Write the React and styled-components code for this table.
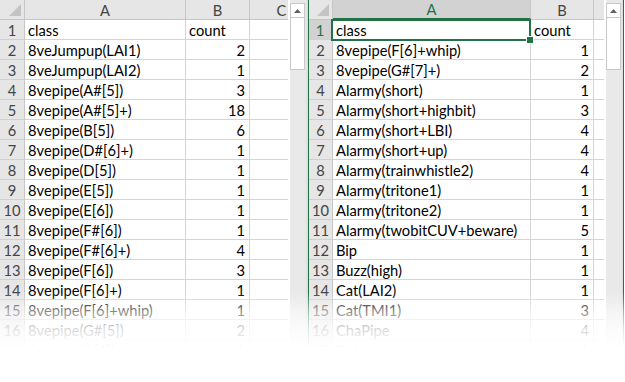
import styled, { createGlobalStyle } from "styled-components";

const GlobalStyle = createGlobalStyle`
  html, body {
    margin: 0;
    padding: 0;
    background: #ffffff;
  }
  body {
    font-family: Lato, "Liberation Sans", sans-serif;
  }
`;

const leftRows = [
  ["class", "count"],
  ["8veJumpup(LAI1)", 2],
  ["8veJumpup(LAI2)", 1],
  ["8vepipe(A#[5])", 3],
  ["8vepipe(A#[5]+)", 18],
  ["8vepipe(B[5])", 6],
  ["8vepipe(D#[6]+)", 1],
  ["8vepipe(D[5])", 1],
  ["8vepipe(E[5])", 1],
  ["8vepipe(E[6])", 1],
  ["8vepipe(F#[6])", 1],
  ["8vepipe(F#[6]+)", 4],
  ["8vepipe(F[6])", 3],
  ["8vepipe(F[6]+)", 1],
  ["8vepipe(F[6]+whip)", 1],
  ["8vepipe(G#[5])", 2],
  ["8vepipe(G[6])", 1],
];

const rightRows = [
  ["class", "count"],
  ["8vepipe(F[6]+whip)", 1],
  ["8vepipe(G#[7]+)", 2],
  ["Alarmy(short)", 1],
  ["Alarmy(short+highbit)", 3],
  ["Alarmy(short+LBI)", 4],
  ["Alarmy(short+up)", 4],
  ["Alarmy(trainwhistle2)", 4],
  ["Alarmy(tritone1)", 1],
  ["Alarmy(tritone2)", 1],
  ["Alarmy(twobitCUV+beware)", 5],
  ["Bip", 1],
  ["Buzz(high)", 1],
  ["Cat(LAI2)", 1],
  ["Cat(TMI1)", 3],
  ["ChaPipe", 4],
  ["Chime", 1],
];

const Stage = styled.div`
  position: relative;
  width: 625px;
  height: 382px;
  overflow: hidden;
  display: flex;
  background: #ffffff;
`;

const Window = styled.div`
  display: flex;
  height: 382px;
  box-sizing: border-box;
  border-left: ${(p) => (p.$active ? "1px solid #217346" : "none")};
  border-right: ${(p) => (p.$active ? "1px solid #217346" : "none")};
`;

const GridArea = styled.div`
  width: ${(p) => p.$width}px;
  overflow: hidden;
  background: #ffffff;
`;

const Sheet = styled.div`
  display: grid;
  grid-template-columns: ${(p) => p.$cols};
  grid-auto-rows: 20px;
  font-size: 14.7px;
  color: #000000;
`;

const Corner = styled.div`
  position: relative;
  background: #e6e6e6;
  border-right: 1px solid #c6c6c6;
  border-bottom: 1px solid #c6c6c6;
  box-sizing: border-box;

  &::after {
    content: "";
    position: absolute;
    right: 3px;
    bottom: 3px;
    width: 0;
    height: 0;
    border-left: 12px solid transparent;
    border-bottom: 12px solid #c3c3c3;
  }
`;

const ColHead = styled.div`
  background: ${(p) => (p.$sel ? "#d2d2d2" : "#e6e6e6")};
  color: ${(p) => (p.$sel ? "#217346" : "#444444")};
  border-right: 1px solid #c6c6c6;
  border-bottom: ${(p) => (p.$sel ? "2px solid #217346" : "1px solid #c6c6c6")};
  box-sizing: border-box;
  display: flex;
  align-items: center;
  justify-content: center;
  white-space: nowrap;
`;

const RowHead = styled.div`
  background: ${(p) => (p.$sel ? "#d2d2d2" : "#e6e6e6")};
  color: ${(p) => (p.$sel ? "#217346" : "#444444")};
  border-right: ${(p) => (p.$sel ? "2px solid #217346" : "1px solid #c6c6c6")};
  border-bottom: 1px solid #d0d0d0;
  box-sizing: border-box;
  display: flex;
  align-items: center;
  justify-content: center;
`;

const Cell = styled.div`
  position: relative;
  border-right: 1px solid #d4d4d4;
  border-bottom: 1px solid #d4d4d4;
  box-sizing: border-box;
  display: flex;
  align-items: center;
  justify-content: ${(p) => (p.$num ? "flex-end" : "flex-start")};
  padding: 0 4px 0 3px;
  white-space: nowrap;
  overflow: visible;

  ${(p) =>
    p.$active &&
    `
    z-index: 2;
    &::after {
      content: "";
      position: absolute;
      left: -2px;
      top: -1px;
      right: -1px;
      bottom: -2px;
      border: 2px solid #217346;
    }
    &::before {
      content: "";
      position: absolute;
      right: -4px;
      bottom: -5px;
      width: 6px;
      height: 6px;
      background: #217346;
      border: 1px solid #ffffff;
      z-index: 3;
    }
  `}
`;

const ScrollColumn = styled.div`
  width: ${(p) => p.$width}px;
  background: linear-gradient(to right, #ffffff 0px, #ffffff 2px, #e9e9e9 2px, #e9e9e9 17px, #dcdcdc 100%);
  padding: 3px 0 0 2px;
  box-sizing: border-box;
`;

const ScrollBar = styled.div`
  width: 15px;
  display: flex;
  flex-direction: column;
`;

const ArrowBox = styled.div`
  height: 15px;
  background: #ffffff;
  border: 1px solid #c8c8c8;
  box-sizing: border-box;
  display: flex;
  align-items: center;
  justify-content: center;
`;

const Thumb = styled.div`
  height: 52px;
  background: #ffffff;
  border: 1px solid #c8c8c8;
  border-top: none;
  box-sizing: border-box;
`;

const Fade = styled.div`
  position: absolute;
  left: 0;
  right: 0;
  top: 0;
  bottom: 0;
  pointer-events: none;
  background: linear-gradient(
    to bottom,
    rgba(255, 255, 255, 0) 0px,
    rgba(255, 255, 255, 0) 292px,
    rgba(255, 255, 255, 0.55) 312px,
    rgba(255, 255, 255, 0.85) 330px,
    #ffffff 348px
  );
`;

const UpArrow = () => (
  <svg width="7" height="4" viewBox="0 0 7 4">
    <path d="M0 4 L3.5 0 L7 4 Z" fill="#606060" />
  </svg>
);

const Row = ({ n, name, count, active, extra }) => (
  <>
    <RowHead $sel={active && n === 1}>{n}</RowHead>
    <Cell $active={active && n === 1}>{name}</Cell>
    <Cell $num={typeof count === "number"}>{count}</Cell>
    {Array.from({ length: extra }).map((_, k) => (
      <Cell key={k} />
    ))}
  </>
);

const SheetView = ({ rows, cols, widths, gridWidth, scrollWidth, active }) => (
  <Window $active={active}>
    <GridArea $width={gridWidth}>
      <Sheet $cols={widths}>
        <Corner />
        {cols.map((c, i) => (
          <ColHead key={i} $sel={active && c === "A"}>
            {c}
          </ColHead>
        ))}
        {rows.map(([name, count], i) => (
          <Row key={i} n={i + 1} name={name} count={count} active={active} extra={cols.length - 2} />
        ))}
      </Sheet>
    </GridArea>
    <ScrollColumn $width={scrollWidth}>
      <ScrollBar>
        <ArrowBox>
          <UpArrow />
        </ArrowBox>
        <Thumb />
      </ScrollBar>
    </ScrollColumn>
  </Window>
);

export default function App() {
  return (
    <>
      <GlobalStyle />
      <Stage>
        <SheetView
          rows={leftRows}
          cols={["A", "B", "C"]}
          widths="25px 161px 64px 64px"
          gridWidth={288}
          scrollWidth={20}
        />
        <SheetView
          rows={rightRows}
          cols={["A", "B", ""]}
          widths="24px 198px 63px 64px"
          gridWidth={295}
          scrollWidth={19}
          active
        />
        <Fade />
      </Stage>
    </>
  );
}
